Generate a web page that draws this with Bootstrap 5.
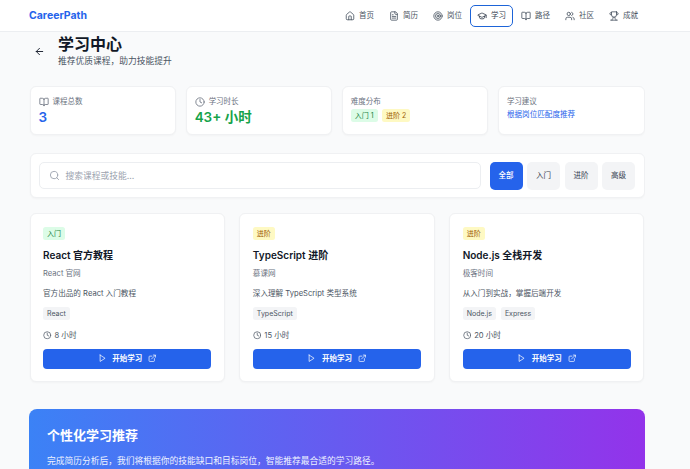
<!doctype html>
<html lang="zh-CN">

<head>
    <meta charset="utf-8">
    <meta name="viewport" content="width=device-width, initial-scale=1">
    <title>学习中心</title>
    <link href="https://cdn.jsdelivr.net/npm/bootstrap@5.3.3/dist/css/bootstrap.min.css" rel="stylesheet">
    <style>
        html, body { height: 469px; overflow: hidden; }
        body {
            background-color: #f9fafb;
            color: #111827;
            font-family: Inter, "Noto Sans CJK SC", sans-serif;
            font-size: 7.6px;
            line-height: 12px;
        }
        .ico {
            width: 10px; height: 10px; flex: none;
            fill: none; stroke: currentColor; stroke-width: 2;
            stroke-linecap: round; stroke-linejoin: round;
        }
        .top { height: 32px; padding: 0 45px 0 29px; background: #fff; border-bottom: 1px solid #eceef1; }
        .brand { color: #2563eb; font-size: 10.5px; font-weight: 700; }
        .top-nav { gap: 1px; }
        .top-nav a {
            display: flex; align-items: center; gap: 4px; white-space: nowrap;
            height: 22px; width: 43px; padding: 0 0 0 7px;
            color: #4b5563; font-size: 7.5px; text-decoration: none; border-radius: 5px;
        }
        .top-nav a.active { color: #374151; border: 1.5px solid #1d64d8; padding-left: 6px; }
        .page { width: 616px; height: 437px; margin-left: 29px; overflow: hidden; padding: 0 .5px; }
        .head { height: 54px; padding-top: 3px; }
        .head .back { width: 11px; height: 11px; margin: 11px 13.5px 0 4px; }
        .head h1 { font-size: 16px; line-height: 18px; font-weight: 600; margin: 0; }
        .head p { font-size: 8.75px; line-height: 12px; margin: 2px 0 0; color: #4b5563; }
        .panel { background: #fff; border: 1px solid #f0f1f3; border-radius: 6px; box-shadow: 0 1px 2px rgba(0,0,0,.03); }
        .stats { grid-template-columns: repeat(4, 1fr); gap: 9.5px; }
        .stat { height: 49px; padding: 8px 8px; }
        .stat-label { color: #6b7280; gap: 4px; height: 13px; font-size: 7.5px; }
        .stat-value { font-size: 13.5px; line-height: 18px; font-weight: 600; }
        .c-blue { color: #2563eb; }
        .c-green { color: #16a34a; }
        .stat-row { gap: 4.5px; margin-top: 1px; }
        .stat-tip { margin-top: 1px; color: #2563eb; }
        .lv { display: inline-block; padding: 0 4px; height: 13px; line-height: 13px; font-size: 7px; border-radius: 2.5px; }
        .lv-easy { background: #dcfce7; color: #15803d; }
        .lv-mid { background: #fef9c3; color: #a16207; }
        .search-bar { height: 45px; margin-top: 18px; padding: 0 8.5px 0 8px; gap: 8.5px; }
        .search-box { flex: 1; height: 27px; padding-left: 9px; gap: 6px; border: 1px solid #eceef1; border-radius: 5px; color: #9ca3af; font-size: 8.75px; }
        .search-box .ico { width: 11px; height: 11px; }
        .fbtn { width: 33px; height: 28px; padding: 0; border: 0; border-radius: 5px; background: #f3f4f6; color: #374151; font-size: 7.5px; }
        .fbtn.on { background: #2563eb; color: #fff; font-weight: 500; }
        .gap-f { gap: 4.5px; }
        .courses { margin-top: 14.5px; grid-template-columns: repeat(3, 1fr); gap: 14.5px; }
        .course { height: 169px; padding: 13px 12.5px 0; }
        .course h2 { font-size: 10px; line-height: 14px; font-weight: 600; margin: 8px 0 0; }
        .course .src { color: #6b7280; margin-top: 6px; }
        .course .desc { color: #4b5563; margin-top: 8px; }
        .tags { gap: 5px; margin-top: 7px; height: 13px; }
        .tag { background: #f3f4f6; color: #4b5563; font-size: 7px; line-height: 13px; padding: 0 4px; border-radius: 2.5px; }
        .dur { gap: 3px; margin-top: 10px; color: #4b5563; height: 12px; }
        .dur .ico { width: 8.5px; height: 8.5px; }
        .go {
            height: 20px; margin-top: 7px; width: 100%; padding: 0; gap: 6px; border: 0;
            background: #2563eb; color: #fff; font-size: 7.5px; font-weight: 600; border-radius: 4px;
        }
        .go .ico { width: 8.5px; height: 8.5px; }
        .promo {
            margin: 27px -.5px 0; height: 120px; padding: 18px; color: #fff; border-radius: 8px;
            background: linear-gradient(90deg, #3b82f6, #9333ea);
        }
        .promo h3 { font-size: 13px; line-height: 17px; font-weight: 600; margin: 0 0 11px; }
        .promo p { font-size: 8.75px; line-height: 13px; margin: 0; color: #eef2ff; }
    </style>
</head>

<body>
    <svg width="0" height="0" class="position-absolute">
        <symbol id="i-home" viewBox="0 0 24 24"><path d="M15 21v-8a1 1 0 0 0-1-1h-4a1 1 0 0 0-1 1v8"/><path d="M3 10a2 2 0 0 1 .709-1.528l7-5.999a2 2 0 0 1 2.582 0l7 5.999A2 2 0 0 1 21 10v9a2 2 0 0 1-2 2H5a2 2 0 0 1-2-2z"/></symbol>
        <symbol id="i-file" viewBox="0 0 24 24"><path d="M15 2H6a2 2 0 0 0-2 2v16a2 2 0 0 0 2 2h12a2 2 0 0 0 2-2V7Z"/><path d="M14 2v4a2 2 0 0 0 2 2h4"/><path d="M10 9H8"/><path d="M16 13H8"/><path d="M16 17H8"/></symbol>
        <symbol id="i-target" viewBox="0 0 24 24"><circle cx="12" cy="12" r="10"/><circle cx="12" cy="12" r="6"/><circle cx="12" cy="12" r="2"/></symbol>
        <symbol id="i-cap" viewBox="0 0 24 24"><path d="M21.42 10.922a1 1 0 0 0-.019-1.838L12.83 5.18a2 2 0 0 0-1.66 0L2.6 9.08a1 1 0 0 0 0 1.832l8.57 3.908a2 2 0 0 0 1.66 0z"/><path d="M22 10v6"/><path d="M6 12.5V16a6 3 0 0 0 12 0v-3.5"/></symbol>
        <symbol id="i-book" viewBox="0 0 24 24"><path d="M12 7v14"/><path d="M3 18a1 1 0 0 1-1-1V4a1 1 0 0 1 1-1h5a4 4 0 0 1 4 4 4 4 0 0 1 4-4h5a1 1 0 0 1 1 1v13a1 1 0 0 1-1 1h-6a3 3 0 0 0-3 3 3 3 0 0 0-3-3z"/></symbol>
        <symbol id="i-users" viewBox="0 0 24 24"><path d="M16 21v-2a4 4 0 0 0-4-4H6a4 4 0 0 0-4 4v2"/><circle cx="9" cy="7" r="4"/><path d="M22 21v-2a4 4 0 0 0-3-3.87"/><path d="M16 3.13a4 4 0 0 1 0 7.75"/></symbol>
        <symbol id="i-trophy" viewBox="0 0 24 24"><path d="M6 9H4.5a2.5 2.5 0 0 1 0-5H6"/><path d="M18 9h1.5a2.5 2.5 0 0 0 0-5H18"/><path d="M4 22h16"/><path d="M10 14.66V17c0 .55-.47.98-.97 1.21C7.85 18.75 7 20.24 7 22"/><path d="M14 14.66V17c0 .55.47.98.97 1.21C16.15 18.75 17 20.24 17 22"/><path d="M18 2H6v7a6 6 0 0 0 12 0V2Z"/></symbol>
        <symbol id="i-clock" viewBox="0 0 24 24"><circle cx="12" cy="12" r="10"/><polyline points="12 6 12 12 16 14"/></symbol>
        <symbol id="i-search" viewBox="0 0 24 24"><circle cx="11" cy="11" r="8"/><path d="m21 21-4.3-4.3"/></symbol>
        <symbol id="i-play" viewBox="0 0 24 24"><polygon points="6 3 20 12 6 21 6 3"/></symbol>
        <symbol id="i-ext" viewBox="0 0 24 24"><path d="M15 3h6v6"/><path d="M10 14 21 3"/><path d="M18 13v6a2 2 0 0 1-2 2H5a2 2 0 0 1-2-2V8a2 2 0 0 1 2-2h6"/></symbol>
        <symbol id="i-back" viewBox="0 0 24 24"><path d="m12 19-7-7 7-7"/><path d="M19 12H5"/></symbol>
    </svg>

    <nav class="top d-flex align-items-center justify-content-between">
        <span class="brand">CareerPath</span>
        <div class="top-nav d-flex align-items-center">
            <a href="#"><svg class="ico"><use href="#i-home"/></svg>首页</a>
            <a href="#"><svg class="ico"><use href="#i-file"/></svg>简历</a>
            <a href="#"><svg class="ico"><use href="#i-target"/></svg>岗位</a>
            <a href="#" class="active"><svg class="ico"><use href="#i-cap"/></svg>学习</a>
            <a href="#"><svg class="ico"><use href="#i-book"/></svg>路径</a>
            <a href="#"><svg class="ico"><use href="#i-users"/></svg>社区</a>
            <a href="#"><svg class="ico"><use href="#i-trophy"/></svg>成就</a>
        </div>
    </nav>

    <div class="page">
        <div class="head d-flex align-items-start">
            <svg class="ico back"><use href="#i-back"/></svg>
            <div>
                <h1>学习中心</h1>
                <p>推荐优质课程，助力技能提升</p>
            </div>
        </div>

        <div class="stats d-grid">
            <div class="panel stat">
                <div class="stat-label d-flex align-items-center"><svg class="ico"><use href="#i-book"/></svg>课程总数</div>
                <div class="stat-value c-blue">3</div>
            </div>
            <div class="panel stat">
                <div class="stat-label d-flex align-items-center"><svg class="ico"><use href="#i-clock"/></svg>学习时长</div>
                <div class="stat-value c-green">43+ 小时</div>
            </div>
            <div class="panel stat">
                <div class="stat-label d-flex align-items-center">难度分布</div>
                <div class="stat-row d-flex"><span class="lv lv-easy">入门 1</span><span class="lv lv-mid">进阶 2</span></div>
            </div>
            <div class="panel stat">
                <div class="stat-label d-flex align-items-center">学习建议</div>
                <div class="stat-tip">根据岗位匹配度推荐</div>
            </div>
        </div>

        <div class="panel search-bar d-flex align-items-center">
            <div class="search-box d-flex align-items-center"><svg class="ico"><use href="#i-search"/></svg>搜索课程或技能...</div>
            <div class="d-flex gap-f">
                <button class="fbtn on">全部</button>
                <button class="fbtn">入门</button>
                <button class="fbtn">进阶</button>
                <button class="fbtn">高级</button>
            </div>
        </div>

        <div class="courses d-grid">
            <div class="panel course">
                <span class="lv lv-easy">入门</span>
                <h2>React 官方教程</h2>
                <div class="src">React 官网</div>
                <div class="desc">官方出品的 React 入门教程</div>
                <div class="tags d-flex"><span class="tag">React</span></div>
                <div class="dur d-flex align-items-center"><svg class="ico"><use href="#i-clock"/></svg>8 小时</div>
                <button class="go btn d-flex align-items-center justify-content-center"><svg class="ico"><use href="#i-play"/></svg>开始学习<svg class="ico"><use href="#i-ext"/></svg></button>
            </div>
            <div class="panel course">
                <span class="lv lv-mid">进阶</span>
                <h2>TypeScript 进阶</h2>
                <div class="src">慕课网</div>
                <div class="desc">深入理解 TypeScript 类型系统</div>
                <div class="tags d-flex"><span class="tag">TypeScript</span></div>
                <div class="dur d-flex align-items-center"><svg class="ico"><use href="#i-clock"/></svg>15 小时</div>
                <button class="go btn d-flex align-items-center justify-content-center"><svg class="ico"><use href="#i-play"/></svg>开始学习<svg class="ico"><use href="#i-ext"/></svg></button>
            </div>
            <div class="panel course">
                <span class="lv lv-mid">进阶</span>
                <h2>Node.js 全栈开发</h2>
                <div class="src">极客时间</div>
                <div class="desc">从入门到实战，掌握后端开发</div>
                <div class="tags d-flex"><span class="tag">Node.js</span><span class="tag">Express</span></div>
                <div class="dur d-flex align-items-center"><svg class="ico"><use href="#i-clock"/></svg>20 小时</div>
                <button class="go btn d-flex align-items-center justify-content-center"><svg class="ico"><use href="#i-play"/></svg>开始学习<svg class="ico"><use href="#i-ext"/></svg></button>
            </div>
        </div>

        <div class="promo">
            <h3>个性化学习推荐</h3>
            <p>完成简历分析后，我们将根据你的技能缺口和目标岗位，智能推荐最合适的学习路径。</p>
        </div>
    </div>
</body>

</html>
